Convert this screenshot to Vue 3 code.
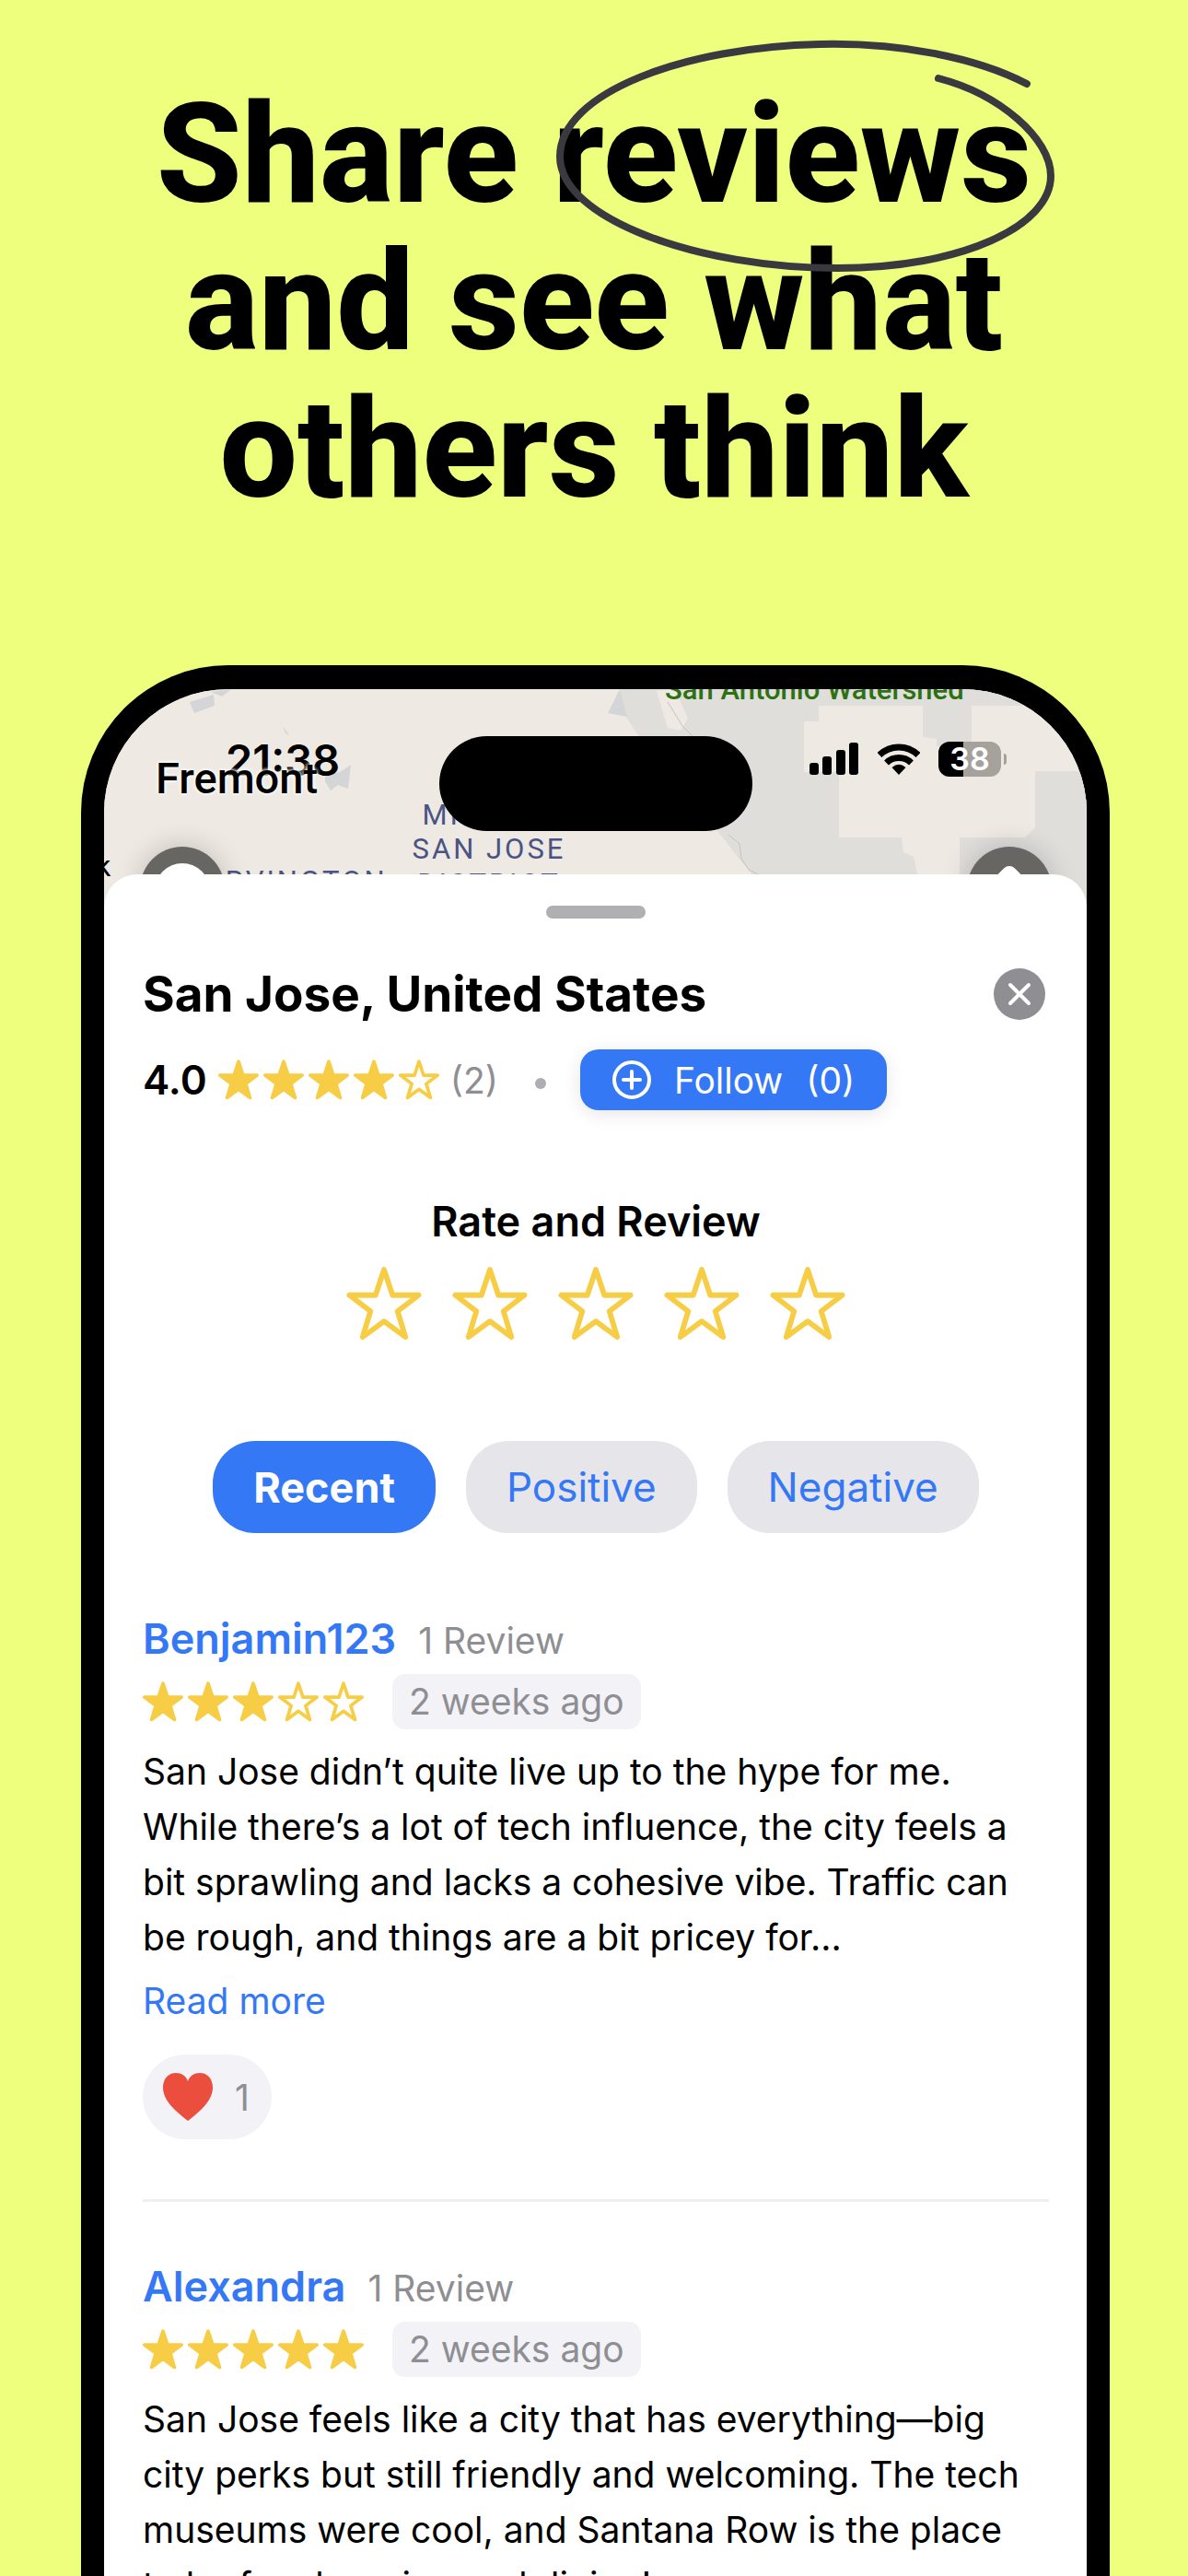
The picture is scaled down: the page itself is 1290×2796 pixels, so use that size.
<script setup>
import { ref } from 'vue'

const starPath = 'M12 1.2 L14.7 9.3 L23 9.3 L16.3 14.4 L18.8 22.6 L12 17.6 L5.2 22.6 L7.7 14.4 L1 9.3 L9.3 9.3 Z'
const tabs = ['Recent', 'Positive', 'Negative']
const activeTab = ref('Recent')
const reviews = [
  {
    name: 'Benjamin123',
    stars: 3,
    text: 'San Jose didn’t quite live up to the hype for me.\nWhile there’s a lot of tech influence, the city feels a\nbit sprawling and lacks a cohesive vibe. Traffic can\nbe rough, and things are a bit pricey for...',
    more: true,
    likes: 1
  },
  {
    name: 'Alexandra',
    stars: 5,
    text: 'San Jose feels like a city that has everything—big\ncity perks but still friendly and welcoming. The tech\nmuseums were cool, and Santana Row is the place\nto be for shopping and dining!',
    more: false,
    likes: 0
  }
]
</script>

<template>
  <main class="page">
    <h1 class="headline">
      Share
      <span class="circled">reviews<svg class="scribble" viewBox="600 40 550 260" aria-hidden="true">
        <path d="M1115 91 C1060 62 975 46 890 48 C745 51 608 100 608 170 C608 238 760 291 909 291 C1045 291 1141 245 1141 191 C1141 150 1085 102 1019 85" />
      </svg></span><br>
      and see what<br>
      others think
    </h1>

    <section class="phone">
      <div class="map">
        <svg class="map-art" viewBox="0 0 1067 260" preserveAspectRatio="xMidYMin slice" aria-hidden="true">
          <rect width="1067" height="260" fill="#eee9e3" />
          <path fill="#e0dedb" d="M561 0 L550 24 L565 27 L581 52 L640 120 L670 159 L688 182 L707 205 L707 260 L883 260 L883 200 L879 182 L868 177 L866 161 L798 161 L798 90 L760 90 L760 35 L776 35 L776 18 L889 18 L889 52 L904 54 L904 62 L942 62 L942 18 L1067 18 L1067 0 Z" />
          <path fill="#eee9e3" d="M600 2 L612 42 L626 45 L634 32 L620 0 Z" />
          <path fill="#e0dedb" d="M1067 89 L1011 89 L1011 150 L1000 161 L929 161 L929 260 L1067 260 Z" />
          <path fill="none" stroke="#c3c3c2" stroke-width="1" d="M612 14 L628 40 L642 54 M678 158 L690 168 L692 184 L700 196 L712 202" />
          <g fill="#d4d5d7">
            <path d="M93 14 L119 6 L120 18 L98 26 Z M116 3 L138 0 L128 8 Z M240 94 L256 90 L268 82 L265 108 L254 104 L246 110 L240 100 Z M194 40 L201 50 L197 48 Z M547 26 L560 0 L568 30 Z" />
          </g>
          <g class="map-district" text-anchor="middle">
            <text x="418" y="147">MISSION</text>
            <text x="418" y="184">SAN JOSE</text>
            <text x="418" y="222">DISTRICT</text>
            <text x="214" y="219">IRVINGTON</text>
          </g>
          <text class="map-park" x="609" y="11">San Antonio Watershed</text>
          <text class="map-town" x="-101" y="203">Newark</text>
        </svg>
        <span class="map-button map-button-left"></span>
        <span class="map-button map-button-right"></span>
      </div>

      <header class="status">
        <time class="clock">21:38</time>
        <div class="status-icons">
          <svg width="54" height="36" viewBox="0 0 54 36" aria-hidden="true">
            <rect x="0" y="22" width="10" height="13" rx="3" />
            <rect x="14" y="15" width="10" height="20" rx="3" />
            <rect x="29" y="8" width="10" height="27" rx="3" />
            <rect x="43" y="0" width="10" height="35" rx="3" />
          </svg>
          <svg width="46" height="36" viewBox="0 0 46 36" aria-hidden="true">
            <path fill="none" stroke="#000" stroke-width="7" d="M2 13.5 A30 30 0 0 1 44 13.5 M9.5 22 A19.500 19.500 0 0 1 36.500 22" />
            <path d="M23 35 L15.500 27 Q23 20.500 30.500 27 Z" />
          </svg>
          <span class="battery"><span class="battery-body">38</span><span class="battery-tip"></span></span>
        </div>
      </header>
      <span class="city">Fremont</span>
      <div class="island"></div>

      <div class="sheet">
        <div class="grabber"></div>

        <div class="title-row">
          <h2>San Jose, United States</h2>
          <button class="close" aria-label="Close">
            <svg viewBox="0 0 56 56" aria-hidden="true"><path d="M18 18 L38 38 M38 18 L18 38" /></svg>
          </button>
        </div>

        <div class="rating-row">
          <strong>4.0</strong>
          <span class="stars">
            <svg v-for="n in 5" :key="n" viewBox="0 0 24 24" :class="{ full: n <= 4 }"><path :d="starPath" /></svg>
          </span>
          <span class="count">(2)</span>
          <span class="dot"></span>
          <button class="follow">
            <svg viewBox="0 0 42 42" aria-hidden="true">
              <circle cx="21" cy="21" r="19" /><path d="M21 12 V30 M12 21 H30" />
            </svg>
            <span>Follow</span>
            <span>(0)</span>
          </button>
        </div>

        <h3 class="rate-title">Rate and Review</h3>
        <div class="rate">
          <button v-for="n in 5" :key="n" :aria-label="`Rate ${n}`">
            <svg viewBox="0 0 24 24"><path :d="starPath" /></svg>
          </button>
        </div>

        <nav class="tabs">
          <button
            v-for="tab in tabs"
            :key="tab"
            :class="{ active: tab === activeTab }"
            @click="activeTab = tab"
          >{{ tab }}</button>
        </nav>

        <article v-for="review in reviews" :key="review.name" class="review">
          <div class="author">
            <a href="#">{{ review.name }}</a>
            <span>1 Review</span>
          </div>
          <div class="meta">
            <span class="stars">
              <svg v-for="n in 5" :key="n" viewBox="0 0 24 24" :class="{ full: n <= review.stars }"><path :d="starPath" /></svg>
            </span>
            <span class="age">2 weeks ago</span>
          </div>
          <p>{{ review.text }}</p>
          <a v-if="review.more" href="#" class="more">Read more</a>
          <button v-if="review.likes" class="like">
            <svg viewBox="0 0 54 52" aria-hidden="true">
              <path d="M27 52 C14 42 0 30 0 16 C0 6 6 0 14 0 C20 0 25 3 27 9 C29 3 34 0 40 0 C48 0 54 6 54 16 C54 30 40 42 27 52 Z" />
            </svg>
            <span>{{ review.likes }}</span>
          </button>
        </article>
      </div>
    </section>
  </main>
</template>

<style>
body {
  margin: 0;
}
</style>

<style scoped>
* {
  box-sizing: border-box;
}

button {
  border: 0;
  padding: 0;
  font: inherit;
  color: inherit;
  background: none;
  cursor: pointer;
}

a {
  color: #3478f6;
  text-decoration: none;
}

svg {
  display: block;
}

.page {
  height: 100vh;
  overflow: hidden;
  display: flex;
  flex-direction: column;
  background: #eeff7e;
  font-family: Inter, Roboto, sans-serif;
  color: #000;
}

.headline {
  margin: 0;
  padding: 88px 0 154px;
  text-align: center;
  font-family: Roboto, sans-serif;
  font-size: 150px;
  font-weight: 800;
  line-height: 160px;
}

.circled {
  position: relative;
}

.scribble {
  position: absolute;
  left: 0;
  top: -40px;
  width: 550px;
  height: 260px;
  overflow: visible;
}

.scribble path {
  fill: none;
  stroke: #3b3940;
  stroke-width: 8;
  stroke-linecap: round;
}

.phone {
  position: relative;
  flex: 1;
  min-height: 0;
  margin: 0 85px 0 88px;
  border: 25px solid #000;
  border-top-width: 26px;
  border-bottom: 0;
  border-radius: 160px 160px 0 0;
  background: #eee9e3;
  overflow: hidden;
}

.map {
  position: absolute;
  inset: 0 0 auto;
  height: 260px;
}

.map-art {
  width: 100%;
  height: 100%;
}

.map-district {
  font: 400 31px Roboto, sans-serif;
  letter-spacing: 3px;
  fill: #4a5484;
}

.map-park {
  font: 500 31px Roboto, sans-serif;
  fill: #2d7212;
}

.map-town {
  font: 400 32px Roboto, sans-serif;
}

.map-button {
  position: absolute;
  top: 171px;
  width: 92px;
  height: 92px;
  border-radius: 50%;
  background: #686663;
  box-shadow: 0 0 30px rgba(0, 0, 0, 0.2);
}

.map-button::after {
  content: '';
  position: absolute;
  left: 16px;
  top: 18px;
  width: 60px;
  height: 60px;
  border-radius: 50%;
  background: #fff;
}

.map-button-left {
  left: 39px;
}

.map-button-right {
  right: 38px;
}

.map-button-right::after {
  border-radius: 8px 0 0;
  transform: rotate(45deg);
  top: 30px;
}

.status {
  position: relative;
  display: flex;
  align-items: center;
  justify-content: space-between;
  height: 152px;
  padding: 0 87px 0 132px;
}

.clock {
  font-size: 47px;
  font-weight: 600;
}

.status-icons {
  display: flex;
  align-items: center;
  gap: 20px;
}

.battery {
  display: flex;
  align-items: center;
  gap: 3px;
}

.battery-body {
  width: 68px;
  height: 38px;
  border-radius: 12px;
  background: linear-gradient(90deg, #000 40%, #a5a19d 40%);
  color: #fff;
  font-size: 34px;
  font-weight: 600;
  line-height: 38px;
  text-align: center;
}

.battery-tip {
  width: 3px;
  height: 12px;
  border-radius: 0 3px 3px 0;
  background: #a5a19d;
}

.city {
  position: absolute;
  left: 56px;
  top: 70px;
  font: 500 47px/54px Roboto, sans-serif;
  text-shadow: 0 0 4px #fff, 0 0 4px #fff;
}

.island {
  position: absolute;
  left: 50%;
  top: 51px;
  width: 340px;
  height: 103px;
  margin-left: -170px;
  border-radius: 52px;
  background: #000;
}

.sheet {
  position: relative;
  margin-top: 49px;
  padding: 34px 41px 40px 42px;
  border-radius: 36px 36px 0 0;
  background: #fff;
}

.grabber {
  width: 108px;
  height: 14px;
  margin: 0 auto;
  border-radius: 7px;
  background: #b0b0b3;
}

.title-row {
  display: flex;
  align-items: center;
  justify-content: space-between;
  margin-top: 50px;
}

h2,
h3,
p {
  margin: 0;
}

h2 {
  font-size: 53px;
  font-weight: 700;
  line-height: 64px;
}

.close {
  width: 56px;
  height: 56px;
  margin-right: 4px;
  border-radius: 50%;
  background: #8e8e93;
}

.close path,
.follow path,
.follow circle {
  fill: none;
  stroke: #fff;
  stroke-width: 4;
  stroke-linecap: round;
}

.rating-row {
  display: flex;
  align-items: center;
  height: 66px;
  margin-top: 28px;
  font-size: 39px;
}

.rating-row strong {
  font-size: 44px;
  font-weight: 600;
}

.rating-row .stars {
  margin-left: 12px;
}

.stars {
  display: flex;
  gap: 5px;
}

.stars svg {
  width: 44px;
  height: 44px;
}

.stars path,
.rate path {
  fill: none;
  stroke: #f7cd46;
  stroke-width: 2;
  stroke-linejoin: round;
}

.stars .full path {
  fill: #f7cd46;
}

.count {
  margin-left: 12px;
  color: #8e8e93;
}

.dot {
  width: 12px;
  height: 12px;
  margin: 8px 37px 0 40px;
  border-radius: 50%;
  background: #aeaeb2;
}

.follow {
  display: flex;
  align-items: center;
  gap: 25px;
  height: 66px;
  padding: 0 35px;
  border-radius: 20px;
  background: #3478f6;
  color: #fff;
  box-shadow: 0 4px 20px rgba(0, 0, 0, 0.1);
}

.follow svg {
  width: 42px;
  height: 42px;
}

.rate-title {
  margin-top: 93px;
  text-align: center;
  font-size: 45px;
  font-weight: 600;
  line-height: 56px;
}

.rate {
  display: flex;
  justify-content: center;
  gap: 33px;
  margin-top: 20px;
}

.rate svg {
  width: 82px;
  height: 82px;
}

.rate path {
  stroke-width: 1.7;
}

.tabs {
  display: flex;
  justify-content: center;
  gap: 33px;
  margin-top: 108px;
}

.tabs button {
  height: 100px;
  padding: 0 44px;
  border-radius: 46px;
  background: #e5e5ea;
  color: #3478f6;
  font-size: 44px;
}

.tabs .active {
  background: #3478f6;
  color: #fff;
  font-size: 45px;
  font-weight: 700;
}

.review {
  padding-top: 64px;
}

.tabs + .review {
  padding-top: 87px;
}

.review + .review {
  margin-top: 65px;
  border-top: 3px solid #efeff1;
}

.author {
  display: flex;
  align-items: baseline;
  gap: 24px;
  line-height: 56px;
  font-size: 39px;
  color: #8e8e93;
}

.author a {
  font-size: 45px;
  font-weight: 600;
}

.meta {
  display: flex;
  align-items: center;
  gap: 31px;
  margin-top: 8px;
}

.age {
  padding: 0 18px;
  border-radius: 14px;
  background: #f2f2f7;
  color: #8e8e93;
  font-size: 39px;
  line-height: 60px;
}

.review p {
  margin-top: 16px;
  font-size: 39px;
  line-height: 60px;
  white-space: pre-line;
}

.more {
  display: block;
  margin-top: 9px;
  font-size: 39px;
  line-height: 60px;
}

.like {
  display: flex;
  align-items: center;
  gap: 24px;
  height: 92px;
  margin-top: 28px;
  padding: 0 24px 0 22px;
  border-radius: 46px;
  background: #f2f2f7;
  color: #8e8e93;
  font-size: 39px;
}

.like svg {
  width: 54px;
  height: 52px;
  fill: #eb4e3d;
}
</style>
